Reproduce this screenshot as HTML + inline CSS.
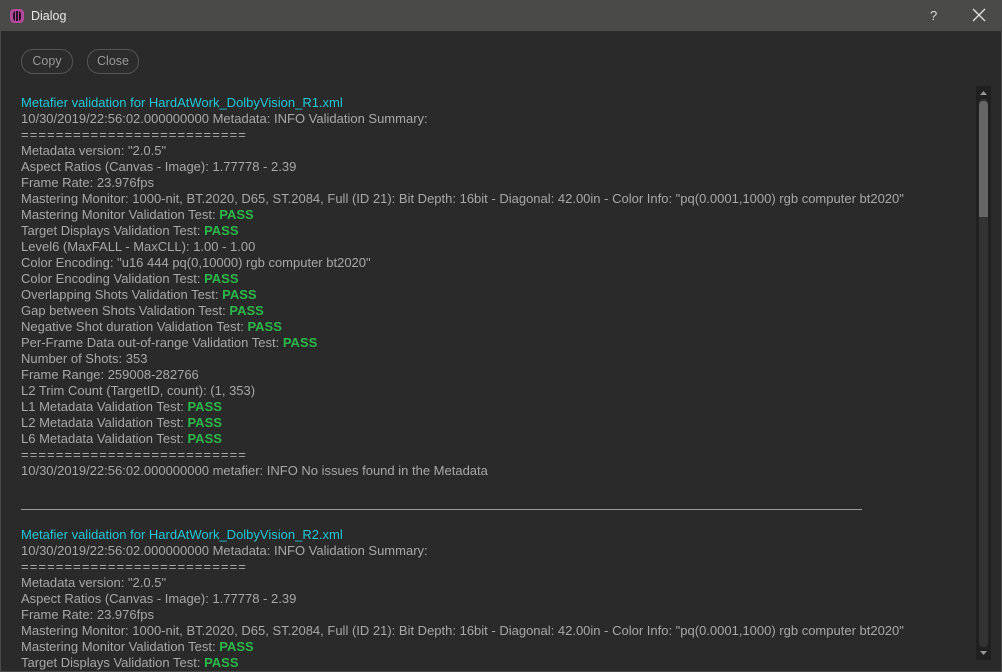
<!DOCTYPE html>
<html><head><meta charset="utf-8"><style>
html,body{margin:0;padding:0;width:1002px;height:672px;overflow:hidden;background:#2a2a2a;font-family:"Liberation Sans",sans-serif;}
.win{position:absolute;left:0;top:0;width:1000px;height:670px;border:1px solid #4a4a4a;background:#2a2a2a;overflow:hidden}
.title{position:absolute;left:0;top:0;width:1000px;height:30px;background:#4a4a48;}
.title .t{position:absolute;left:30px;top:8px;color:#e8e8e8;font-size:12.5px}
.icon{position:absolute;left:9px;top:8px;width:14px;height:14px;border-radius:4px;background:#b04a9a}
.icon:after{content:"";position:absolute;left:3px;top:2px;width:8px;height:10px;border-radius:3px;background:repeating-linear-gradient(90deg,#2a1028 0 2px,#b04a9a 2px 3px)}
.q{position:absolute;left:929px;top:7px;color:#ddd;font-size:13px}
.x{position:absolute;left:970px;top:6px;}
.btn{position:absolute;top:48px;height:23px;border:1px solid #555;border-radius:12px;color:#999;font-size:12.5px;line-height:23px;text-align:center;background:#2c2c2c}
.content{position:absolute;left:20px;top:94px;font-size:13px;line-height:16px;color:#a8a8a8;white-space:pre}
.c{color:#20c8d8}.p{color:#2db84a;font-weight:bold}
.e{letter-spacing:1.1px}
.hr{position:absolute;left:20px;top:508px;width:841px;height:1px;background:#9a9a9a}
.sb{position:absolute;left:975px;top:85px;width:15px;height:574px;background:#202020}
.gr{position:absolute;left:978px;top:98px;width:9px;height:548px;background:#333;border-radius:4px}
.th{position:absolute;left:978px;top:100px;width:9px;height:116px;background:#666;border-radius:4px 4px 0 0}
</style></head><body><div class="win">
<div class="title"><div class="icon"></div><div class="t">Dialog</div><div class="q">?</div>
<svg class="x" width="16" height="16" viewBox="0 0 16 16"><path d="M2 2L14 14M14 2L2 14" stroke="#ddd" stroke-width="1.4"/></svg></div>
<div class="btn" style="left:20px;width:50px">Copy</div>
<div class="btn" style="left:86px;width:50px">Close</div>
<div class="content"><span class="c">Metafier validation for HardAtWork_DolbyVision_R1.xml</span>
10/30/2019/22:56:02.000000000 Metadata: INFO Validation Summary:
<span class="e">==========================</span>
Metadata version: "2.0.5"
Aspect Ratios (Canvas - Image): 1.77778 - 2.39
Frame Rate: 23.976fps
Mastering Monitor: 1000-nit, BT.2020, D65, ST.2084, Full (ID 21): Bit Depth: 16bit - Diagonal: 42.00in - Color Info: "pq(0.0001,1000) rgb computer bt2020"
Mastering Monitor Validation Test: <span class="p">PASS</span>
Target Displays Validation Test: <span class="p">PASS</span>
Level6 (MaxFALL - MaxCLL): 1.00 - 1.00
Color Encoding: "u16 444 pq(0,10000) rgb computer bt2020"
Color Encoding Validation Test: <span class="p">PASS</span>
Overlapping Shots Validation Test: <span class="p">PASS</span>
Gap between Shots Validation Test: <span class="p">PASS</span>
Negative Shot duration Validation Test: <span class="p">PASS</span>
Per-Frame Data out-of-range Validation Test: <span class="p">PASS</span>
Number of Shots: 353
Frame Range: 259008-282766
L2 Trim Count (TargetID, count): (1, 353)
L1 Metadata Validation Test: <span class="p">PASS</span>
L2 Metadata Validation Test: <span class="p">PASS</span>
L6 Metadata Validation Test: <span class="p">PASS</span>
<span class="e">==========================</span>
10/30/2019/22:56:02.000000000 metafier: INFO No issues found in the Metadata



<span class="c">Metafier validation for HardAtWork_DolbyVision_R2.xml</span>
10/30/2019/22:56:02.000000000 Metadata: INFO Validation Summary:
<span class="e">==========================</span>
Metadata version: "2.0.5"
Aspect Ratios (Canvas - Image): 1.77778 - 2.39
Frame Rate: 23.976fps
Mastering Monitor: 1000-nit, BT.2020, D65, ST.2084, Full (ID 21): Bit Depth: 16bit - Diagonal: 42.00in - Color Info: "pq(0.0001,1000) rgb computer bt2020"
Mastering Monitor Validation Test: <span class="p">PASS</span>
Target Displays Validation Test: <span class="p">PASS</span></div>
<div class="hr"></div>
<div class="sb"></div><div class="gr"></div><div class="th"></div>
<svg style="position:absolute;left:979px;top:90px" width="7" height="5"><path d="M0 4L3.5 0L7 4Z" fill="#999"/></svg>
<svg style="position:absolute;left:979px;top:650px" width="7" height="5"><path d="M0 0L3.5 4L7 0Z" fill="#999"/></svg>
</div></body></html>
